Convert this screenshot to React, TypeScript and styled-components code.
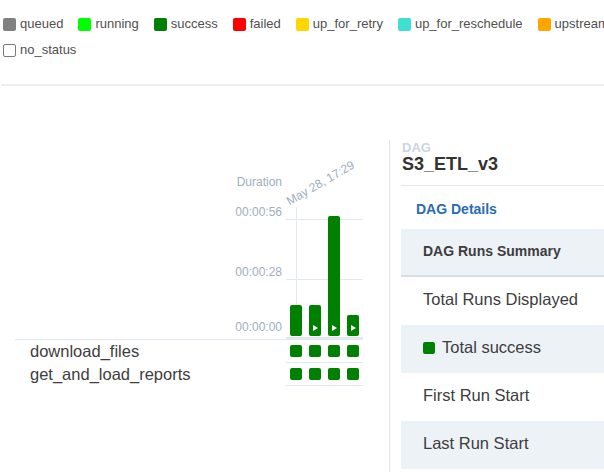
import React from 'react';
import styled, { createGlobalStyle } from 'styled-components';

const GlobalStyle = createGlobalStyle`
  html, body { margin: 0; padding: 0; background: #fff; overflow: hidden; }
  body { font-family: "Liberation Sans", Arial, Helvetica, sans-serif; color: #51504f; }
`;

const Page = styled.div`
  width: 604px;
  height: 472px;
  overflow: hidden;
`;

const Legend = styled.div`
  display: flex;
  flex-wrap: wrap;
  width: 665px;
  column-gap: 15px;
  row-gap: 6px;
  padding: 14px 0 0 3px;
  font-size: 13px;
  line-height: 20px;
`;

const LegendItem = styled.span`
  display: inline-flex;
  align-items: center;
  gap: 4px;
  white-space: nowrap;
`;

const Swatch = styled.span<{ $color: string; $outline?: boolean }>`
  width: 13px;
  height: 13px;
  border-radius: 2px;
  box-sizing: border-box;
  background: ${(p) => p.$color};
  border: ${(p) => (p.$outline ? '1px solid #7a7a7a' : 'none')};
`;

const Rule = styled.div`
  margin: 24px 0 0 1px;
  border-top: 2px solid #eeeeee;
`;

const Main = styled.div`
  display: flex;
  align-items: stretch;
  margin-top: 54px;
  height: 332px;
`;

const LeftPane = styled.div`
  width: 389px;
  flex: none;
  box-sizing: border-box;
  padding-left: 15px;
`;

const GridTable = styled.div`
  display: grid;
  grid-template-columns: 271px 77px;
`;

const AxisCell = styled.div`
  height: 200px;
  box-sizing: border-box;
  border-bottom: 1px solid #e2e8f0;
  display: flex;
  flex-direction: column;
  align-items: flex-end;
  padding-right: 4px;
  font-size: 12px;
  line-height: 14px;
  color: #a0aec0;
`;

const AxisLabel = styled.span<{ $gap: number }>`
  margin-top: ${(p) => p.$gap}px;
`;

const ChartCell = styled.div`
  position: relative;
  height: 200px;
  box-sizing: border-box;
  border-bottom: 3px solid #e2e8f0;
  display: flex;
  align-items: flex-end;
  gap: 7px;
  padding: 0 4px 1px;
`;

const HGridLine = styled.div<{ $top: number }>`
  position: absolute;
  left: 0;
  right: 0;
  top: ${(p) => p.$top}px;
  border-top: 1px solid #e2e8f0;
`;

const VGridLine = styled.div`
  position: absolute;
  left: 10px;
  top: 67px;
  bottom: 1px;
  border-left: 1px solid #e2e8f0;
`;

const DateLabel = styled.span`
  position: absolute;
  left: 5px;
  top: 54px;
  font-size: 12px;
  line-height: 14px;
  color: #a0aec0;
  white-space: nowrap;
  transform-origin: bottom left;
  transform: rotate(-30deg);
`;

const Bar = styled.div`
  position: relative;
  z-index: 1;
  width: 12px;
  border-radius: 2px;
  background: #008000;
  display: flex;
  flex-direction: column;
  justify-content: flex-end;
  align-items: center;
  padding-bottom: 5px;
  box-sizing: border-box;
`;

const PlayMark = styled.span`
  width: 0;
  height: 0;
  margin-left: 1px;
  border-left: 5px solid #ffffff;
  border-top: 3px solid transparent;
  border-bottom: 3px solid transparent;
`;

const TaskName = styled.div`
  height: 22px;
  padding-left: 15px;
  font-size: 16.5px;
  line-height: 22px;
  color: #3d3d3d;
  white-space: nowrap;
`;

const TaskRuns = styled.div`
  height: 22px;
  border-bottom: 1px solid #e2e8f0;
  display: flex;
  align-items: center;
  gap: 7px;
  padding: 0 4px;
`;

const Square = styled.div<{ $color: string }>`
  width: 12px;
  height: 12px;
  border-radius: 2px;
  background: ${(p) => p.$color};
`;

const Details = styled.div`
  flex: 1;
  min-width: 0;
  border-left: 1px solid #e2e8f0;
  padding-left: 11px;
`;

const DagKicker = styled.div`
  font-size: 13px;
  line-height: 13px;
  font-weight: bold;
  color: #cbd5e0;
  padding: 1px 0 0 1px;
`;

const DagTitle = styled.div`
  margin-top: 1px;
  font-size: 18px;
  line-height: 18px;
  font-weight: bold;
  color: #333333;
  padding-left: 1px;
  padding-bottom: 12px;
  border-bottom: 1px solid #e2e8f0;
`;

const TabBar = styled.div`
  height: 43px;
  box-sizing: border-box;
  padding: 13px 15px 0;
`;

const Tab = styled.span`
  font-size: 14px;
  line-height: 20px;
  font-weight: bold;
  color: #2b6cb0;
`;

const Table = styled.div`
  width: 100%;
  display: flex;
  flex-direction: column;
`;

const HeadRow = styled.div`
  height: 48px;
  box-sizing: border-box;
  background: #edf2f7;
  border-bottom: 2px solid #d5dde6;
  padding-left: 22px;
  padding-bottom: 2px;
  display: flex;
  align-items: center;
  font-size: 14px;
  font-weight: bold;
  color: #3d3d3d;
`;

const Row = styled.div<{ $striped?: boolean }>`
  height: 48px;
  box-sizing: border-box;
  background: ${(p) => (p.$striped ? '#edf2f7' : '#ffffff')};
  padding-left: 22px;
  padding-bottom: 3px;
  display: flex;
  align-items: center;
  gap: 7px;
  font-size: 16.5px;
  color: #3d3d3d;
  white-space: nowrap;
`;

const states = [
  { name: 'queued', color: '#808080' },
  { name: 'running', color: '#00ff00' },
  { name: 'success', color: '#008000' },
  { name: 'failed', color: '#ff0000' },
  { name: 'up_for_retry', color: '#ffd700' },
  { name: 'up_for_reschedule', color: '#40e0d0' },
  { name: 'upstream_failed', color: '#ffa500' },
];

const runs = [
  { duration: 15, manual: false },
  { duration: 15, manual: true },
  { duration: 57.5, manual: true },
  { duration: 10, manual: true },
];

const PX_PER_SEC = 117 / 56;

const tasks = ['download_files', 'get_and_load_reports'];

export default function App() {
  return (
    <Page>
      <GlobalStyle />
      <Legend>
        {states.map((s) => (
          <LegendItem key={s.name}>
            <Swatch $color={s.color} />
            {s.name}
          </LegendItem>
        ))}
        <LegendItem>
          <Swatch $color="#ffffff" $outline />
          no_status
        </LegendItem>
      </Legend>
      <Rule />
      <Main>
        <LeftPane>
          <GridTable>
            <AxisCell>
              <AxisLabel $gap={35}>Duration</AxisLabel>
              <AxisLabel $gap={16}>00:00:56</AxisLabel>
              <AxisLabel $gap={46}>00:00:28</AxisLabel>
              <AxisLabel $gap={41}>00:00:00</AxisLabel>
            </AxisCell>
            <ChartCell>
              <HGridLine $top={79} />
              <HGridLine $top={139} />
              <VGridLine />
              <DateLabel>May 28, 17:29</DateLabel>
              {runs.map((r, i) => (
                <Bar key={i} style={{ height: Math.round(r.duration * PX_PER_SEC) }}>
                  {r.manual && <PlayMark />}
                </Bar>
              ))}
            </ChartCell>
            {tasks.map((t) => (
              <React.Fragment key={t}>
                <TaskName>{t}</TaskName>
                <TaskRuns>
                  {runs.map((_, i) => (
                    <Square key={i} $color="#008000" />
                  ))}
                </TaskRuns>
              </React.Fragment>
            ))}
          </GridTable>
        </LeftPane>
        <Details>
          <DagKicker>DAG</DagKicker>
          <DagTitle>S3_ETL_v3</DagTitle>
          <TabBar>
            <Tab>DAG Details</Tab>
          </TabBar>
          <Table>
            <HeadRow>DAG Runs Summary</HeadRow>
            <Row>Total Runs Displayed</Row>
            <Row $striped>
              <Square $color="#008000" />
              Total success
            </Row>
            <Row>First Run Start</Row>
            <Row $striped>Last Run Start</Row>
          </Table>
        </Details>
      </Main>
    </Page>
  );
}
